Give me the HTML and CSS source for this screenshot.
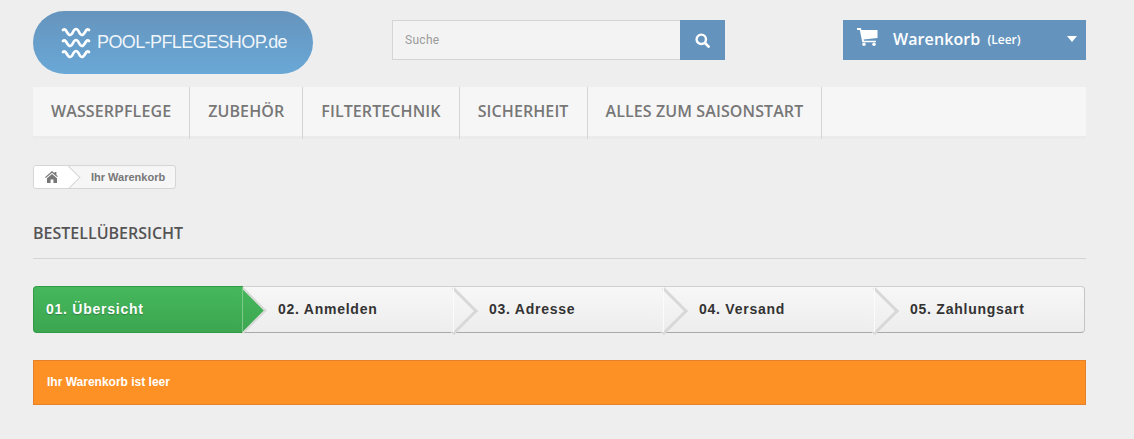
FILE: index.html
```html
<!DOCTYPE html>
<html lang="de">
<head>
  <meta charset="UTF-8" />
  <meta name="viewport" content="width=device-width, initial-scale=1.0" />
  <title>Warenkorb</title>
  <link rel="stylesheet" href="styles.css">
</head>
<body>
  <div class="page">
    <header class="top-row">
      <a class="logo" href="#">
        <svg class="logo-waves" width="30" height="32" viewBox="0 0 30 32" fill="none" stroke="#fff" stroke-width="2.7" stroke-linecap="round" stroke-linejoin="round">
          <path d="M2 3 C5 0 6 8 9 8 C12 8 12 2 15 2 C18 2 18 8 21 8 C24 8 25 0 28 3" />
          <path d="M2 14 C5 11 6 19 9 19 C12 19 12 13 15 13 C18 13 18 19 21 19 C24 19 25 11 28 14" />
          <path d="M2 25 C5 22 6 30 9 30 C12 30 12 24 15 24 C18 24 18 30 21 30 C24 30 25 22 28 25" />
        </svg>
        <span class="logo-text">POOL-PFLEGESHOP.de</span>
      </a>
      <form class="search">
        <input class="search-input" type="text" placeholder="Suche">
        <button class="search-btn" type="button" aria-label="Suche">
          <svg width="15" height="15" viewBox="0 0 15 15" fill="none" stroke="#fff">
            <circle cx="6.3" cy="6.3" r="4.7" stroke-width="2.4" />
            <path d="M10 10 L13.6 13.6" stroke-width="2.7" stroke-linecap="round" />
          </svg>
        </button>
      </form>
      <div class="cart">
        <svg class="cart-icon" width="21" height="18" viewBox="0 0 21 18" fill="#fff">
          <path d="M0 0 H3.8 L4.5 2 H20.5 V10 L6.6 11.4 L7 12.7 H19 V14.3 H5.3 L2.8 2 H0 Z" />
          <circle cx="7" cy="16.3" r="1.7" />
          <circle cx="17" cy="16.3" r="1.7" />
        </svg>
        <span class="cart-label">Warenkorb</span>
        <span class="cart-state">(Leer)</span>
        <span class="cart-caret"></span>
      </div>
    </header>

    <nav class="main-nav">
      <a class="nav-item" href="#">WASSERPFLEGE</a>
      <a class="nav-item" href="#">ZUBEHÖR</a>
      <a class="nav-item" href="#">FILTERTECHNIK</a>
      <a class="nav-item" href="#">SICHERHEIT</a>
      <a class="nav-item" href="#">ALLES ZUM SAISONSTART</a>
    </nav>

    <div class="breadcrumb">
      <a class="crumb-home" href="#" aria-label="Startseite">
        <svg width="14" height="12" viewBox="0 0 14 12" fill="#777">
          <path d="M7 0 L9.6 2.3 V1 H11.4 V3.9 L14 6.2 L13.2 7.1 L7 1.7 L0.8 7.1 L0 6.2 Z" />
          <path d="M7 2.9 L12 7.2 V12 H8.4 V8.4 H5.6 V12 H2 V7.2 Z" />
        </svg>
      </a>
      <span class="crumb-current">Ihr Warenkorb</span>
    </div>

    <h1 class="page-heading">BESTELLÜBERSICHT</h1>

    <ul class="steps">
      <li class="step step-active">01. Übersicht</li>
      <li class="step">02. Anmelden</li>
      <li class="step">03. Adresse</li>
      <li class="step">04. Versand</li>
      <li class="step">05. Zahlungsart</li>
    </ul>

    <p class="alert">Ihr Warenkorb ist leer</p>
  </div>
</body>
</html>
```

FILE: styles.css
```css
* {
  box-sizing: border-box;
}

body {
  margin: 0;
  background: #eeeeee;
  font-family: 'Liberation Sans', Arial, sans-serif;
}

.page {
  width: 1053px;
  margin-left: 33px;
  padding-top: 11px;
}

/* header */
.top-row {
  display: flex;
  align-items: flex-start;
  height: 76px;
}

.logo {
  display: flex;
  align-items: center;
  gap: 6px;
  width: 280px;
  height: 63px;
  padding: 0 0 0 28px;
  border-radius: 32px;
  background: linear-gradient(180deg, #6594bd 0%, #6aa8d7 100%);
  text-decoration: none;
}

.logo-text {
  color: rgba(255, 255, 255, 0.92);
  font-size: 18px;
  letter-spacing: -0.6px;
}

.search {
  display: flex;
  width: 333px;
  height: 40px;
  margin: 9px 0 0 79px;
}

.search-input {
  flex: 1;
  min-width: 0;
  height: 40px;
  padding: 0 12px;
  border: 1px solid #d6d4d4;
  border-right: none;
  background: #f3f3f3;
  font-family: 'Roboto', Arial, sans-serif;
  font-size: 12px;
  letter-spacing: 0.3px;
}

.search-input::placeholder {
  color: #9c9b9b;
  opacity: 1;
}

.search-btn {
  display: flex;
  align-items: center;
  justify-content: center;
  width: 45px;
  height: 40px;
  border: none;
  padding: 0;
  background: #6494bd;
}

.cart {
  display: flex;
  align-items: center;
  width: 243px;
  height: 40px;
  margin: 9px 0 0 118px;
  padding: 0 9px 2px 14px;
  background: #6494bd;
  color: #fff;
  font-family: 'Open Sans', Arial, sans-serif;
  font-weight: 600;
}

.cart-icon {
  margin-top: -4px;
}

.cart-label {
  margin-left: 15px;
  font-size: 16px;
  letter-spacing: 0.1px;
}

.cart-state {
  margin-left: 7px;
  font-size: 12px;
}

.cart-caret {
  margin-left: auto;
  width: 0;
  height: 0;
  border-left: 5.5px solid transparent;
  border-right: 5.5px solid transparent;
  border-top: 6px solid #fff;
}

/* nav */
.main-nav {
  display: flex;
  height: 52px;
  background: #f6f6f6;
  border-bottom: 3px solid #ebebeb;
}

.nav-item {
  display: block;
  height: 52px;
  padding: 0 18px 3px 18px;
  border-right: 1px solid #d6d4d4;
  color: #777777;
  font-family: 'Open Sans', Arial, sans-serif;
  font-size: 16px;
  font-weight: 600;
  letter-spacing: 0.1px;
  line-height: 49px;
  text-decoration: none;
}

/* breadcrumb */
.breadcrumb {
  display: flex;
  width: max-content;
  height: 24px;
  margin-top: 26px;
  border: 1px solid #d6d4d4;
  border-radius: 3px;
  overflow: hidden;
  background: #f6f6f6;
}

.crumb-home {
  position: relative;
  display: flex;
  align-items: center;
  width: 35px;
  padding-left: 11px;
  background: #fff;
}

.crumb-home::after {
  content: "";
  position: absolute;
  top: 3px;
  right: -8px;
  width: 16px;
  height: 16px;
  background: #fff;
  border-top: 1px solid #d6d4d4;
  border-right: 1px solid #d6d4d4;
  transform: rotate(45deg);
}

.crumb-current {
  padding: 0 10px 0 22px;
  color: #777777;
  font-size: 11px;
  font-weight: 700;
  line-height: 22px;
}

/* heading */
.page-heading {
  height: 37px;
  margin: 33px 0 27px;
  border-bottom: 1px solid #d6d4d4;
  color: #555454;
  font-family: 'Open Sans', Arial, sans-serif;
  font-size: 16px;
  font-weight: 600;
  line-height: 22px;
}

/* steps */
.steps {
  display: grid;
  grid-template-columns: 210px 211px 210px 211px 210px;
  height: 47px;
  margin: 0 0 27px;
  padding: 0;
  list-style: none;
}

.step {
  position: relative;
  padding-left: 35px;
  border-top: 1px solid #d0d0d0;
  border-bottom: 1px solid #a9a9a9;
  background: linear-gradient(180deg, #f7f7f7 0%, #ededed 100%);
  color: #333333;
  font-size: 14px;
  font-weight: 700;
  letter-spacing: 0.75px;
  line-height: 44px;
}

.step:first-child {
  border-radius: 4px 0 0 4px;
}

.step:last-child {
  border-right: 1px solid #c4c4c4;
  border-radius: 0 4px 4px 0;
}

/* chevron at the end of each step */
.step:not(:last-child)::after {
  content: "";
  position: absolute;
  z-index: 1;
  top: 7px;
  right: -17px;
  width: 31px;
  height: 31px;
  background: linear-gradient(135deg, #f7f7f7 0%, #ededed 100%);
  border-top: 3px solid #d8d8d8;
  border-right: 3px solid #d8d8d8;
  transform: rotate(45deg);
}

.step:not(:last-child)::before {
  content: "";
  position: absolute;
  z-index: 2;
  top: 0;
  bottom: 0;
  right: 0;
  width: 1px;
  background: #fbfbfb;
}

.step-active {
  padding-left: 12px;
  border: 1px solid #2f9c45;
  border-right: none;
  background: linear-gradient(180deg, #45b75c 0%, #3ca650 100%);
  color: #fff;
  text-shadow: 0 1px 1px rgba(0, 0, 0, 0.25);
}

.step-active::after {
  background: linear-gradient(135deg, #45b75c 0%, #3ca650 100%) !important;
  border-width: 2px !important;
}

.step-active::before {
  background: #7cc98a !important;
}

/* alert */
.alert {
  height: 45px;
  margin: 0;
  padding: 0 13px;
  border: 1px solid #e6802b;
  background: #fe9126;
  color: #fff;
  font-size: 12px;
  font-weight: 700;
  line-height: 43px;
}
```
